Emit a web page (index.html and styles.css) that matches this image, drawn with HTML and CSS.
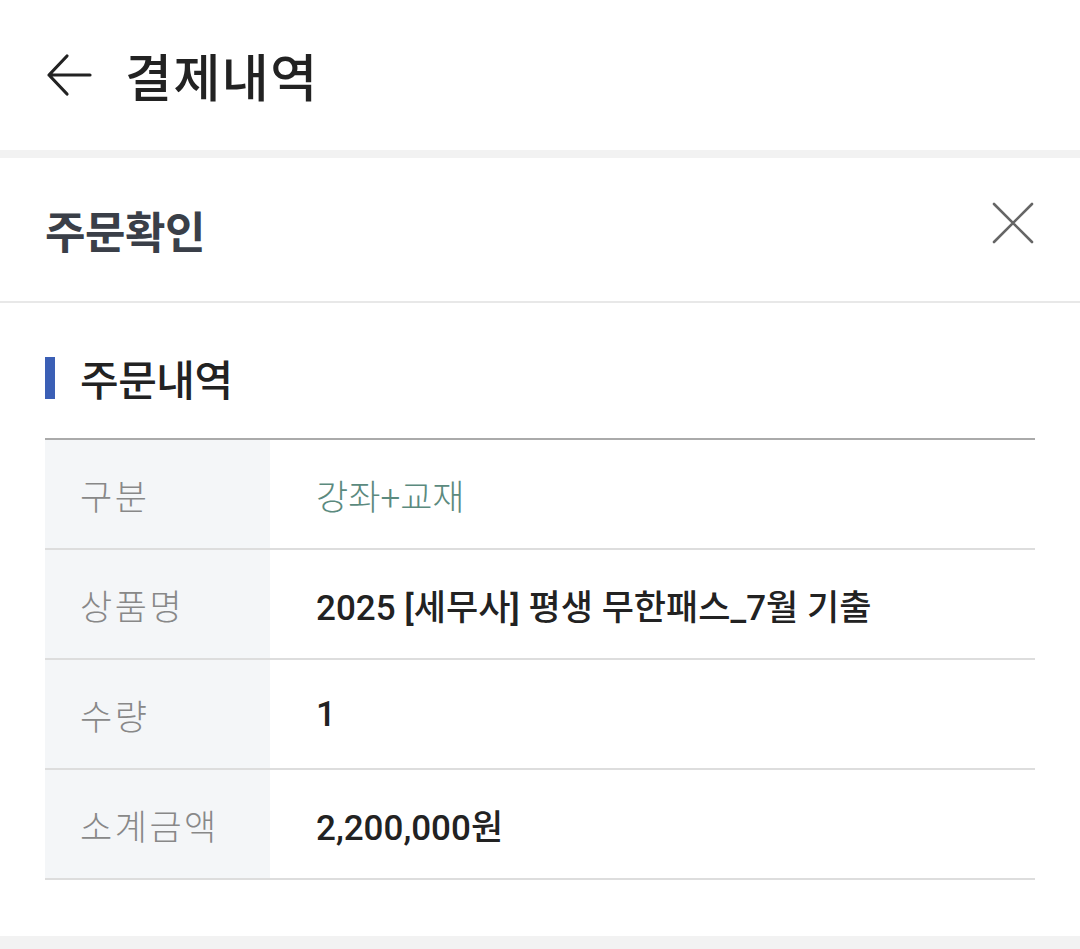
FILE: index.html
```html
<!DOCTYPE html>
<html lang="ko">
<head>
    <meta charset="UTF-8">
    <meta name="viewport" content="width=device-width, initial-scale=1.0">
    <title>결제내역</title>
    <link rel="stylesheet" href="styles.css">
</head>
<body>
    <header class="top-bar">
        <button class="back-btn" aria-label="뒤로">
            <svg width="48" height="48" viewBox="0 0 48 48" fill="none" stroke="#222" stroke-width="3.2" stroke-linecap="round" stroke-linejoin="round">
                <path d="M45 24H4M22 5L4 24l18 19"/>
            </svg>
        </button>
        <h1 class="page-title">결제내역</h1>
    </header>

    <div class="sheet">
        <div class="sheet-head">
            <h2 class="sheet-title">주문확인</h2>
            <button class="close-btn" aria-label="닫기">
                <svg width="42" height="42" viewBox="0 0 42 42" stroke="#666" stroke-width="2.6" stroke-linecap="round">
                    <path d="M2 2l38 38M40 2L2 40"/>
                </svg>
            </button>
        </div>

        <section class="order">
            <h3 class="section-title">주문내역</h3>
            <table class="order-table">
                <tr>
                    <th>구분</th>
                    <td class="category">강좌+교재</td>
                </tr>
                <tr>
                    <th>상품명</th>
                    <td>2025 [세무사] 평생 무한패스_7월 기출</td>
                </tr>
                <tr>
                    <th>수량</th>
                    <td>1</td>
                </tr>
                <tr>
                    <th>소계금액</th>
                    <td>2,200,000원</td>
                </tr>
            </table>
        </section>
    </div>
</body>
</html>
```

FILE: styles.css
```css
body {
    margin: 0;
    font-family: Roboto, "Noto Sans CJK KR", sans-serif;
    background-color: #f2f2f2;
    color: #222;
}
button {
    background: none;
    border: none;
    padding: 0;
    cursor: pointer;
}
.top-bar {
    display: flex;
    align-items: center;
    height: 150px;
    padding: 0 45px;
    background-color: white;
    box-sizing: border-box;
}
.back-btn {
    display: flex;
    margin-right: 32px;
}
.page-title {
    margin: 0;
    font-size: 51px;
    font-weight: 500;
    letter-spacing: 1.5px;
    color: #222;
}
.sheet {
    margin-top: 8px;
    background-color: white;
    padding-bottom: 56px;
}
.sheet-head {
    display: flex;
    align-items: center;
    justify-content: space-between;
    height: 143px;
    padding: 0 46px 0 45px;
    border-bottom: 2px solid #e8e8e8;
}
.sheet-title {
    margin: 0;
    font-size: 44px;
    font-weight: 700;
    letter-spacing: -0.5px;
    color: #3a3f48;
}
.close-btn {
    display: flex;
    margin-bottom: 14px;
}
.order {
    padding: 0 45px;
}
.section-title {
    display: flex;
    align-items: center;
    margin: 44px 0 30px;
    font-size: 42px;
    font-weight: 500;
    letter-spacing: -0.5px;
    color: #222;
}
.section-title::before {
    content: "";
    width: 10px;
    height: 42px;
    margin-right: 25px;
    background-color: #3b5fb5;
}
.order-table {
    width: 100%;
    border-collapse: collapse;
    border-top: 2px solid #aaa;
}
.order-table th,
.order-table td {
    height: 108px;
    border-bottom: 2px solid #ddd;
    text-align: left;
    font-size: 35px;
    padding: 0;
}
.order-table th {
    width: 225px;
    padding-left: 35px;
    box-sizing: border-box;
    background-color: #f4f6f8;
    font-weight: 300;
    letter-spacing: 2.5px;
    color: #888;
}
.order-table td {
    padding-left: 46px;
    font-weight: 500;
    color: #222;
}
.order-table td.category {
    font-weight: 300;
    color: #5b8a7e;
}
```
